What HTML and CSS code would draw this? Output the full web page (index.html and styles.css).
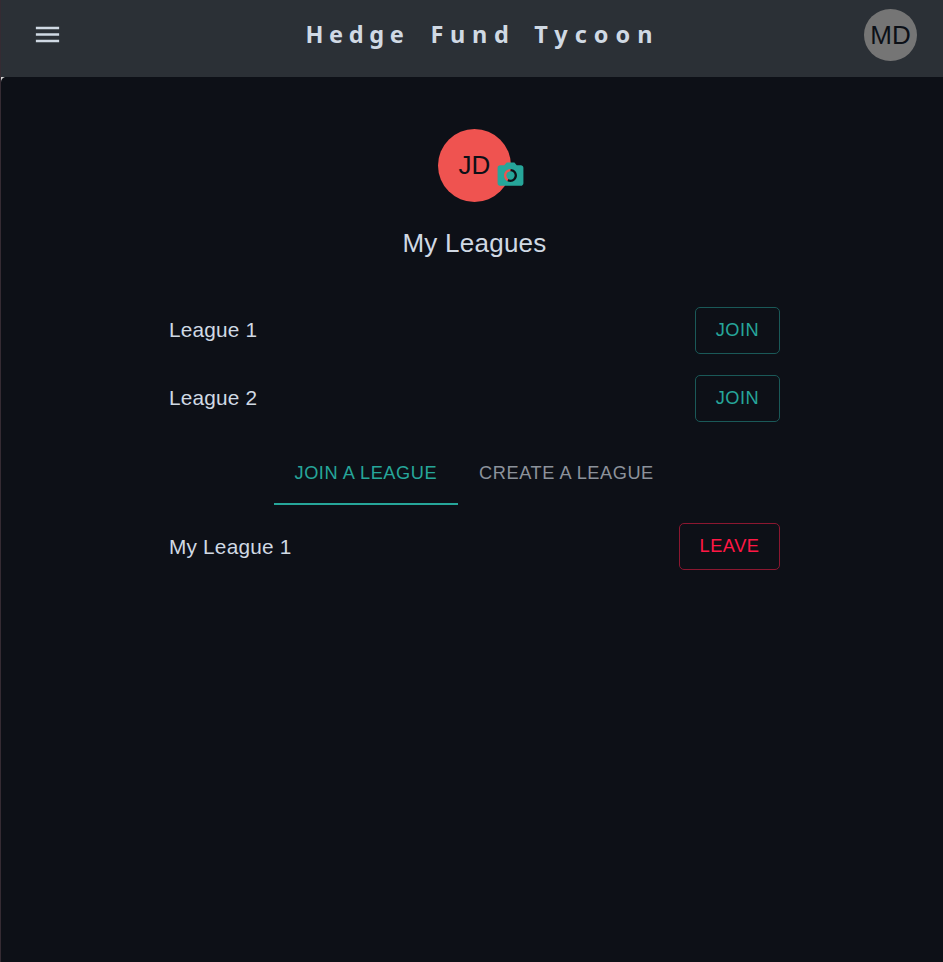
FILE: index.html
```html
<!DOCTYPE html>
<html lang="en">
<head>
<meta charset="utf-8">
<title>Hedge Fund Tycoon</title>
<link rel="stylesheet" href="styles.css">
</head>
<body>
<header class="bar">
  <svg class="menu" viewBox="0 0 24 24"><path d="M3 18h18v-2H3zm0-5h18v-2H3zm0-7v2h18V6z"/></svg>
  <h1 class="brand"><span class="first">Hedge</span> <span class="second">Fund</span> Tycoon</h1>
  <div class="avatar account">MD</div>
</header>
<div class="shell">
<main class="page">
  <div class="profile">
    <div class="avatar player">JD</div>
    <svg class="camera" viewBox="0 0 24 24"><circle cx="12" cy="12" r="3.2"/><path d="M9 2 7.17 4H4c-1.1 0-2 .9-2 2v12c0 1.1.9 2 2 2h16c1.1 0 2-.9 2-2V6c0-1.1-.9-2-2-2h-3.17L15 2zm3 15c-2.76 0-5-2.24-5-5s2.24-5 5-5 5 2.240 5 5-2.240 5-5 5"/></svg>
  </div>
  <h2 class="heading">My Leagues</h2>
  <div class="row"><span class="name">League 1</span><button class="btn">JOIN</button></div>
  <div class="row"><span class="name">League 2</span><button class="btn">JOIN</button></div>
  <nav class="tabs">
    <button class="tab active">JOIN A LEAGUE</button>
    <button class="tab">CREATE A LEAGUE</button>
  </nav>
  <div class="row"><span class="name last">My League 1</span><button class="btn leave">LEAVE</button></div>
</main>
</div>
</body>
</html>
```
FILE: styles.css
```css
* { box-sizing: border-box; }
body {
  margin: 0;
  height: 962px;
  overflow: hidden;
  display: flex;
  flex-direction: column;
  background: #0d1017;
  border-left: 1px solid #352b33;
  color: #d0d9e4;
  font-family: "Liberation Sans", Arial, sans-serif;
}
.bar {
  height: 77px;
  flex: none;
  display: flex;
  justify-content: space-between;
  padding: 9px 26px 0 31px;
  background: #2b3036;
}
.menu { width: 31px; height: 31px; margin-top: 10px; fill: #d0d9e4; }
.brand {
  margin: 7px 0 0 38px;
  font: 700 23.5px/36px "Noto Sans", "Open Sans", sans-serif;
  letter-spacing: 7px;
  word-spacing: 5.5px;
  white-space: nowrap;
}
.first { letter-spacing: 5.6px; margin-right: 2.5px; }
.second { letter-spacing: 6.7px; }
.avatar {
  display: flex;
  align-items: center;
  justify-content: center;
  border-radius: 50%;
  color: #0c1017;
  font-size: 26px;
}
.account { width: 53px; height: 52px; background: #757575; }
.shell {
  flex: 1;
  display: flex;
  background: linear-gradient(90deg, #d8d8d8 4px, transparent 4px);
}
.page {
  flex: 1;
  padding: 52px 163px 0 168px;
  display: flex;
  flex-direction: column;
  background: #0d1017;
  border-top-left-radius: 5px;
}
.profile { position: relative; width: 73px; height: 73px; margin: 0 auto; }
.player { width: 73px; height: 73px; background: #ef5350; }
.camera { position: absolute; left: 57px; top: 31px; width: 31px; height: 31px; fill: #26a69a; }
.heading {
  margin: 20px 0 43px;
  font-size: 26px;
  line-height: 42px;
  font-weight: 400;
  letter-spacing: .25px;
  text-align: center;
}
.row {
  display: flex;
  align-items: center;
  justify-content: space-between;
  height: 47px;
  margin-bottom: 21px;
  font-size: 20.8px;
  letter-spacing: .2px;
}
.name { padding-bottom: 2px; }
.last { padding-bottom: 0; }
.btn {
  width: 85px;
  height: 47px;
  padding: 0;
  border: 1px solid #1a5958;
  border-radius: 5px;
  background: none;
  color: #26a69a;
  font: 18.2px "Liberation Sans", Arial, sans-serif;
  letter-spacing: .52px;
}
.leave { width: 101px; border-color: #8b1730; color: #ff1744; }
.tabs { display: flex; width: 402px; margin: -2px auto 18.4px; }
.tab {
  height: 64px;
  padding: 2px 21px 0;
  border: 0;
  border-bottom: 2px solid transparent;
  background: none;
  color: #8c929b;
  font: 18.2px "Liberation Sans", Arial, sans-serif;
  letter-spacing: .55px;
  white-space: nowrap;
}
.tab.active { color: #26a69a; border-color: #26a69a; }
```
